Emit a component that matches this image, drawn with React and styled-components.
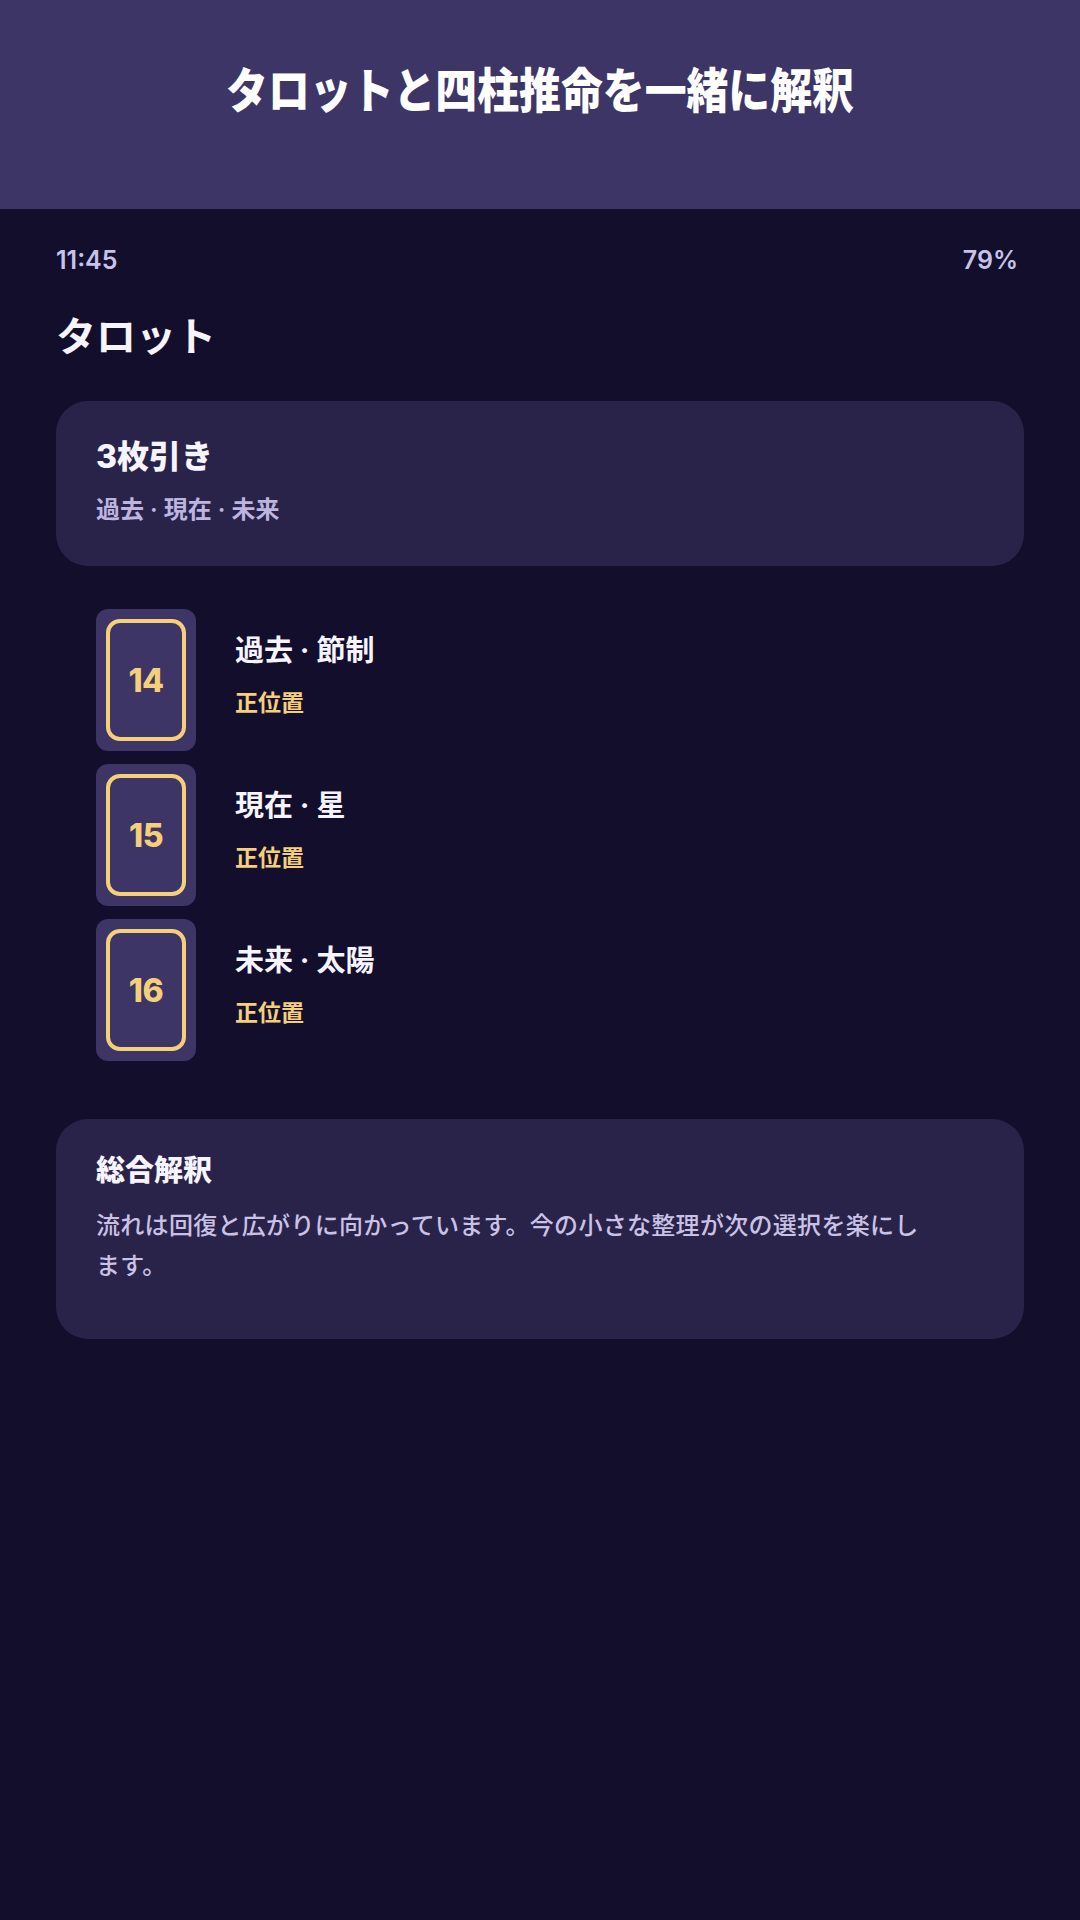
import React from "react";
import styled, { createGlobalStyle } from "styled-components";

const GlobalStyle = createGlobalStyle`
  html, body {
    margin: 0;
    padding: 0;
    background: #120e2c;
  }
  body {
    font-family: "Inter", "Noto Sans CJK JP", sans-serif;
    color: #f6f4ff;
  }
  * {
    box-sizing: border-box;
  }
`;

const Page = styled.div`
  width: 1080px;
  min-height: 1920px;
  background: #120e2c;
`;

const Header = styled.header`
  height: 209px;
  background: #3d3566;
  padding-top: 62px;
  text-align: center;
`;

// the title in the screenshot is set in a condensed face
const HeaderTitle = styled.h1`
  display: inline-block;
  margin: 0;
  font-size: 48px;
  line-height: 1.2;
  font-weight: 900;
  color: #ffffff;
  transform: scaleX(0.872);
`;

const Main = styled.main`
  padding: 36px 56px 0;
`;

const StatusBar = styled.div`
  display: flex;
  justify-content: space-between;
  padding-right: 6px;
  font-size: 25px;
  line-height: 30px;
  font-weight: 600;
  color: #c8c2e8;
`;

const SectionTitle = styled.h2`
  margin: 38px 0 0;
  font-size: 40px;
  line-height: 48px;
  font-weight: 700;
  color: #f6f4ff;
`;

const Panel = styled.section`
  margin-top: ${(p) => p.$top}px;
  background: #2a2349;
  border-radius: 32px;
  padding: ${(p) => p.$pad};
`;

const PanelTitle = styled.h3`
  margin: 0;
  font-size: ${(p) => p.$size}px;
  line-height: ${(p) => p.$lh}px;
  font-weight: 800;
  color: #f6f4ff;
`;

const PanelSub = styled.p`
  margin: 17px 0 0;
  font-size: 24px;
  line-height: 31px;
  font-weight: 600;
  color: #bdb5e0;
`;

const PanelBody = styled.p`
  margin: 16px 0 0;
  max-width: 840px;
  font-size: 24px;
  line-height: 40px;
  font-weight: 500;
  letter-spacing: 0.3px;
  color: #c9c2e6;
`;

const Spread = styled.div`
  margin-top: 43px;
  padding-left: 40px;
  display: flex;
  flex-direction: column;
  gap: 13px;
`;

const Row = styled.div`
  display: flex;
  align-items: center;
  gap: 39px;
`;

const CardBack = styled.div`
  width: 100px;
  height: 142px;
  flex-shrink: 0;
  padding: 10px;
  background: #3d3566;
  border-radius: 12px;
`;

const CardFace = styled.div`
  height: 100%;
  border: 4px solid #f5cf7a;
  border-radius: 14px;
  display: flex;
  align-items: center;
  justify-content: center;
  font-size: 32px;
  font-weight: 800;
  color: #f5cf7a;
  letter-spacing: -0.5px;
`;

const RowText = styled.div`
  display: flex;
  flex-direction: column;
  padding-bottom: 9px;
`;

const RowTitle = styled.div`
  font-size: 29px;
  line-height: 36px;
  font-weight: 700;
  color: #f6f4ff;
`;

const RowSub = styled.div`
  margin-top: 19px;
  font-size: 23px;
  line-height: 30px;
  font-weight: 700;
  color: #f5cf7a;
`;

const cards = [
  { no: 14, label: "過去 · 節制", pos: "正位置" },
  { no: 15, label: "現在 · 星", pos: "正位置" },
  { no: 16, label: "未来 · 太陽", pos: "正位置" },
];

export default function App() {
  return (
    <Page>
      <GlobalStyle />
      <Header>
        <HeaderTitle>タロットと四柱推命を一緒に解釈</HeaderTitle>
      </Header>
      <Main>
        <StatusBar>
          <span>11:45</span>
          <span>79%</span>
        </StatusBar>
        <SectionTitle>タロット</SectionTitle>

        <Panel $top={40} $pad="36px 40px 41px">
          <PanelTitle $size={32} $lh={40}>
            3枚引き
          </PanelTitle>
          <PanelSub>過去 · 現在 · 未来</PanelSub>
        </Panel>

        <Spread>
          {cards.map((c) => (
            <Row key={c.no}>
              <CardBack>
                <CardFace>{c.no}</CardFace>
              </CardBack>
              <RowText>
                <RowTitle>{c.label}</RowTitle>
                <RowSub>{c.pos}</RowSub>
              </RowText>
            </Row>
          ))}
        </Spread>

        <Panel $top={58} $pad="33px 40px 53px">
          <PanelTitle $size={29} $lh={38}>
            総合解釈
          </PanelTitle>
          <PanelBody>
            流れは回復と広がりに向かっています。今の小さな整理が次の選択を楽にします。
          </PanelBody>
        </Panel>
      </Main>
    </Page>
  );
}
